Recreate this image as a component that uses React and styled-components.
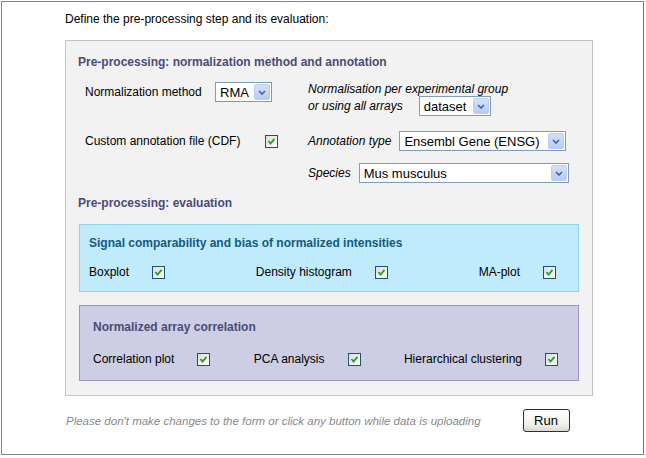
import React from 'react';
import styled, { createGlobalStyle } from 'styled-components';

const GlobalStyle = createGlobalStyle`
  body {
    margin: 0;
    background: #ffffff;
    font-family: "Liberation Sans", Arial, sans-serif;
    font-size: 12px;
    color: #000000;
  }
`;

const Frame = styled.div`
  box-sizing: border-box;
  margin: 1px 0 0 1px;
  width: 643px;
  height: 454px;
  border: 1px solid #858585;
  border-right-color: #7a7a7a;
  padding: 10px 0 0 63px;
`;

const Intro = styled.div`
  line-height: 14px;
  margin-bottom: 14px;
`;

const Panel = styled.div`
  box-sizing: border-box;
  width: 528px;
  background: #f2f2f2;
  border: 1px solid #c3c3c3;
  padding: 14px 12px 14px 12px;
`;

const Heading = styled.div`
  font-weight: bold;
  color: #4a4a7c;
  line-height: 14px;
  margin-bottom: ${(p) => p.$after || 0}px;
`;

const TopGrid = styled.div`
  display: grid;
  grid-template-columns: 223px 1fr;
  padding-left: 7px;
  margin-bottom: 13px;
`;

const Cell = styled.div`
  display: flex;
  align-items: ${(p) => (p.$top ? 'flex-start' : 'center')};
  margin-top: ${(p) => p.$mt || 0}px;
`;

const Label = styled.span`
  line-height: 20px;
  width: ${(p) => (p.$w ? `${p.$w}px` : 'auto')};
  margin-right: ${(p) => p.$gap || 0}px;
  font-style: ${(p) => (p.$italic ? 'italic' : 'normal')};
  white-space: nowrap;
`;

const Stack = styled.div`
  display: flex;
  flex-direction: column;
`;

const ItalicLine = styled.div`
  font-style: italic;
  line-height: 14px;
  margin-right: ${(p) => p.$gap || 0}px;
`;

const SelectBox = styled.div`
  box-sizing: border-box;
  width: ${(p) => p.$w}px;
  height: 20px;
  border: 1px solid #7f9db9;
  background: #ffffff;
  display: flex;
  align-items: center;
  justify-content: space-between;
  padding: 1px 1px 1px 4px;
  font-size: 13px;
  cursor: default;
`;

const ArrowButton = styled.span`
  box-sizing: border-box;
  width: 16px;
  height: 16px;
  border: 1px solid #bccdf7;
  border-radius: 2px;
  background: linear-gradient(to bottom, #d3e0fd 0%, #b7cbf8 100%);
  display: flex;
  align-items: center;
  justify-content: center;
`;

const Select = ({ value, width }) => (
  <SelectBox $w={width}>
    <span>{value}</span>
    <ArrowButton>
      <svg width="8" height="5" viewBox="0 0 8 5">
        <path d="M1 1 L4 4 L7 1" fill="none" stroke="#4d6185" strokeWidth="1.6" />
      </svg>
    </ArrowButton>
  </SelectBox>
);

const CheckFrame = styled.span`
  box-sizing: border-box;
  display: inline-flex;
  width: 13px;
  height: 13px;
  flex: none;
  border: 1px solid #1c5180;
  background: linear-gradient(135deg, #dcdcd7 0%, #ffffff 100%);
  align-items: center;
  justify-content: center;
`;

const Check = () => (
  <CheckFrame>
    <svg width="9" height="9" viewBox="0 0 9 9">
      <path d="M1.5 4 L3.5 6.5 L7.5 1.8" fill="none" stroke="#21a121" strokeWidth="1.8" />
    </svg>
  </CheckFrame>
);

const EvalBox = styled.div`
  box-sizing: border-box;
  margin-left: 1px;
  width: 500px;
  background: ${(p) => p.$bg};
  border: 1px solid ${(p) => p.$border};
  padding: ${(p) => p.$pad};
  margin-bottom: ${(p) => p.$after || 0}px;
`;

const BoxTitle = styled.div`
  font-weight: bold;
  color: ${(p) => p.$color};
  line-height: 14px;
  margin-bottom: ${(p) => p.$after}px;
`;

const OptionRow = styled.div`
  display: flex;
  justify-content: space-between;
  align-items: center;
  height: 14px;
`;

const Option = styled.div`
  display: flex;
  align-items: center;
  gap: 23px;
  line-height: 14px;
`;

const Footer = styled.div`
  display: flex;
  align-items: center;
  gap: 42px;
  margin-top: 13px;
  padding-left: 1px;
`;

const Note = styled.span`
  font-style: italic;
  font-size: 11.5px;
  color: #8a8a8a;
`;

const RunButton = styled.button`
  box-sizing: border-box;
  width: 47px;
  height: 23px;
  border: 1px solid #003c74;
  border-radius: 3px;
  background: linear-gradient(to bottom, #ffffff 0%, #f0f0ea 70%, #dcd9cd 100%);
  font-family: "Liberation Sans", Arial, sans-serif;
  font-size: 13px;
  color: #000000;
  padding: 0;
`;

const signalOptions = ['Boxplot', 'Density histogram', 'MA-plot'];
const correlationOptions = ['Correlation plot', 'PCA analysis', 'Hierarchical clustering'];

export default function App() {
  return (
    <>
      <GlobalStyle />
      <Frame>
        <Intro>Define the pre-processing step and its evaluation:</Intro>
        <Panel>
          <Heading $after={13}>Pre-processing: normalization method and annotation</Heading>
          <TopGrid>
            <Cell $top>
              <Label $w={130}>Normalization method</Label>
              <Select value="RMA" width={57} />
            </Cell>
            <Stack>
              <ItalicLine>Normalisation per experimental group</ItalicLine>
              <Cell>
                <ItalicLine $gap={16}>or using all arrays</ItalicLine>
                <Select value="dataset" width={72} />
              </Cell>
            </Stack>
            <Cell $mt={15}>
              <Label $gap={25}>Custom annotation file (CDF)</Label>
              <Check />
            </Cell>
            <Cell $mt={15}>
              <Label $italic $gap={8}>Annotation type</Label>
              <Select value="Ensembl Gene (ENSG)" width={167} />
            </Cell>
            <div />
            <Cell $mt={12}>
              <Label $italic $gap={8}>Species</Label>
              <Select value="Mus musculus" width={210} />
            </Cell>
          </TopGrid>
          <Heading $after={14}>Pre-processing: evaluation</Heading>
          <EvalBox $bg="#c0ebfd" $border="#8ad4f3" $pad="11px 22px 12px 9px" $after={13}>
            <BoxTitle $color="#145a7b" $after={15}>
              Signal comparability and bias of normalized intensities
            </BoxTitle>
            <OptionRow>
              {signalOptions.map((o) => (
                <Option key={o}>
                  {o}
                  <Check />
                </Option>
              ))}
            </OptionRow>
          </EvalBox>
          <EvalBox $bg="#cdcde3" $border="#a08fcb" $pad="14px 20px 14px 13px">
            <BoxTitle $color="#4a4a7a" $after={18}>Normalized array correlation</BoxTitle>
            <OptionRow>
              {correlationOptions.map((o) => (
                <Option key={o}>
                  {o}
                  <Check />
                </Option>
              ))}
            </OptionRow>
          </EvalBox>
        </Panel>
        <Footer>
          <Note>Please don't make changes to the form or click any button while data is uploading</Note>
          <RunButton>Run</RunButton>
        </Footer>
      </Frame>
    </>
  );
}
